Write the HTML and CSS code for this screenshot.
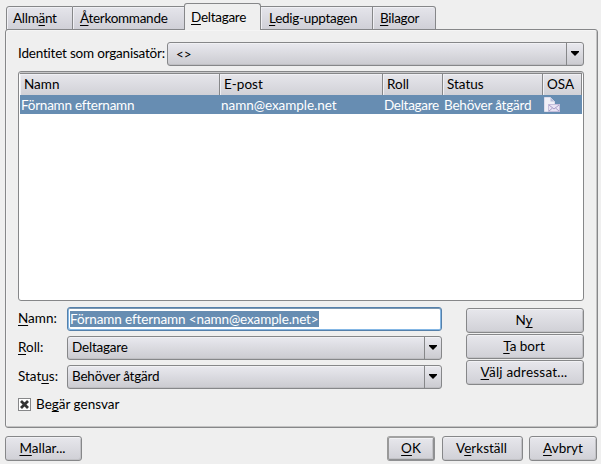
FILE: index.html
```
<!DOCTYPE html>
<html lang="sv">
<head>
<meta charset="utf-8">
<title>Deltagare</title>
<link rel="stylesheet" href="styles.css">
</head>
<body>
<div class="tabs">
  <div class="tab t1">Allm<u>ä</u>nt</div>
  <div class="tab t2"><u>Å</u>terkommande</div>
  <div class="tab active"><u>D</u>eltagare</div>
  <div class="tab t4"><u>L</u>edig-upptagen</div>
  <div class="tab t5"><u>B</u>ilagor</div>
</div>
<main class="panel">
  <div class="organizer">
    <span class="org-label">Identitet som organisatör:</span>
    <div class="combo"><span class="value">&lt;&gt;</span><span class="arrow"></span></div>
  </div>
  <div class="list">
    <div class="row head"><span>Namn</span><span>E-post</span><span>Roll</span><span>Status</span><span>OSA</span></div>
    <div class="row selected"><span class="c1">Förnamn efternamn</span><span class="c2">namn@example.net</span><span class="c3">Deltagare</span><span class="c4">Behöver åtgärd</span><span class="c5">
      <svg width="18" height="17" viewBox="0 0 18 17">
        <path d="M.5 .5h6l4 4v10h-10z" fill="#f0f0f8" stroke="#dcdcec"/>
        <path d="M6.500 .5v4h4z" fill="#b9bdd8"/>
        <rect x="4.500" y="7.500" width="11" height="7" fill="#e9e4f4" stroke="#c4bedb"/>
        <path d="M5 8l5 4 5-4M5 14l3.500-3M15 14l-3.500-3" fill="none" stroke="#a79cc8"/>
      </svg></span></div>
  </div>
  <div class="editor">
    <div class="fields">
      <span class="w1"><u>N</u>amn:</span>
      <div class="input"><span class="selection">Förnamn efternamn &lt;namn@example.net&gt;</span></div>
      <span class="w2"><u>R</u>oll:</span>
      <div class="combo"><span class="value">Deltagare</span><span class="arrow"></span></div>
      <span class="w3">Stat<u>u</u>s:</span>
      <div class="combo"><span class="value">Behöver åtgärd</span><span class="arrow"></span></div>
    </div>
    <div class="actions">
      <div class="button">N<u>y</u></div>
      <div class="button"><u>T</u>a bort</div>
      <div class="button wide"><u>V</u>älj adressat...</div>
    </div>
  </div>
  <div class="check">
    <span class="box"><svg width="11" height="11" viewBox="0 0 11 11"><path d="M2 2l7 7M9 2l-7 7" stroke="#333" stroke-width="2.800"/></svg></span>
    <span class="check-label">Be<u>g</u>är gensvar</span>
  </div>
</main>
<footer class="footer">
  <div class="button b1"><u>M</u>allar...</div>
  <div class="button b2"><u>O</u>K</div>
  <div class="button b3">V<u>e</u>rkställ</div>
  <div class="button b4"><u>A</u>vbryt</div>
</footer>
</body>
</html>
```
FILE: styles.css
```
* { box-sizing: border-box; }
body {
  margin: 0;
  width: 601px;
  height: 464px;
  padding: 3px 3px 2px 5px;
  overflow: hidden;
  background: #efefef;
  color: #000;
  font: 13.5px/18px Lato, "Noto Sans", sans-serif;
  white-space: nowrap;
}
u { text-decoration-thickness: 1px; text-underline-offset: 2px; text-decoration-skip-ink: none; }
.tabs { display: flex; align-items: flex-start; height: 26px; padding-left: 1px; letter-spacing: -.28px; }
.tab {
  height: 24px;
  margin-top: 3px;
  padding: 2px 0 0 6px;
  border: 1px solid #868789;
  border-left-width: 0;
  background: linear-gradient(#e5e5eb, #d0d0d7);
  box-shadow: inset 1px 1px #f0f0f4;
}
.t1 { width: 67px; border-left-width: 1px; border-top-left-radius: 3px; }
.t2 { width: 112px; padding-left: 7px; }
.active {
  position: relative;
  z-index: 1;
  width: 77px;
  height: 27px;
  margin: 0 0 0 -1px;
  padding: 4px 0 0 6px;
  border-width: 1px 1px 0;
  border-radius: 3px 3px 0 0;
  background: #efefef;
  box-shadow: none;
}
.t4 { width: 112px; padding-left: 8px; }
.t5 { width: 63px; padding-left: 7px; border-top-right-radius: 3px; }
.panel {
  height: 399px;
  padding: 12px 12px 0;
  border: 1px solid #868789;
  border-radius: 3px;
  box-shadow: inset 1px 1px #f5f5f5, inset -1px -1px #c4c4c4;
}
.organizer { display: flex; width: 566px; height: 24px; line-height: 22px; }
.org-label { width: 149px; letter-spacing: -.2px; }
.combo {
  display: flex;
  flex: 1;
  height: 24px;
  border: 1px solid #868789;
  border-radius: 3px;
  background: linear-gradient(#e9e9ef, #cbcbd0);
  box-shadow: inset 0 1px #f1f1f4, inset 0 -1px #bfbfc3;
  line-height: 21px;
  letter-spacing: -.2px;
}
.value { flex: 1; padding-left: 4px; }
.organizer .value { padding-left: 8px; line-height: 22px; }
.arrow { width: 17px; border-left: 1px solid #868789; padding: 8px 0 0 4px; }
.arrow::before {
  content: "";
  display: block;
  width: 8px;
  height: 5px;
  background: #000;
  clip-path: polygon(0 0, 100% 0, 100% 20%, 50% 100%, 0 20%);
}
.list {
  width: 566px;
  height: 230px;
  margin-top: 5px;
  padding: 1px;
  border: 1px solid #868789;
  border-radius: 3px;
  background: #fff;
  box-shadow: inset 0 1px #c6c6c8;
}
.row { display: grid; grid-template-columns: 200px 163px 60px 100px 39px; }
.head {
  height: 22px;
  border-top: 1px solid #868789;
  background: linear-gradient(#e6e6eb, #d1d1d7);
  line-height: 21px;
}
.head span { padding-left: 4px; border-right: 1px solid #868789; box-shadow: inset 1px 1px #f0f0f4; }
.selected { height: 19px; background: #678db2; color: #fff; line-height: 21px; letter-spacing: -.2px; }
.selected span { height: 19px; padding-left: 1px; }
.selected .c1 { letter-spacing: -.25px; }
.selected .c2 { letter-spacing: -.05px; }
.selected .c3 { letter-spacing: -.3px; }
.selected svg { display: block; margin-top: 2px; }
.editor { display: flex; justify-content: space-between; width: 566px; margin-top: 6px; }
.fields {
  display: grid;
  grid-template-columns: 49px 375px;
  grid-auto-rows: 24px;
  row-gap: 5px;
  line-height: 22px;
}
.input {
  height: 24px;
  border: 1px solid #5580aa;
  border-radius: 3px;
  padding: 3px 2px;
  background: #fff;
  box-shadow: inset 0 1px #7c97b1, inset 1px -1px #84b7e5, inset -1px 0 #84b7e5;
}
.selection { display: block; width: 249px; height: 16px; background: #678db2; color: #fff; line-height: 17px; letter-spacing: -.12px; }
.actions { display: flex; flex-direction: column; width: 118px; padding-top: 1px; gap: 1px; }
.button {
  height: 25px;
  border: 1px solid #868789;
  border-radius: 3px;
  background: linear-gradient(#e7e7ec, #d0d0d6);
  box-shadow: inset 0 1px #f1f1f4, inset -1px -1px #c2c2c6;
  line-height: 23px;
  text-align: center;
}
.actions .button, .b3 { padding-right: 2px; }
.wide { letter-spacing: .2px; }
.check { display: flex; margin-top: 9px; height: 14px; line-height: 13px; gap: 5px; }
.box { width: 13px; height: 13px; border: 1px solid #868789; background: #fff; }
.box svg { display: block; }
.footer { display: flex; margin-top: 8px; }
.b1 { width: 77px; margin-right: 305px; padding-right: 2px; }
.b2 { width: 48px; margin-right: 7px; border-width: 2px; border-color: #a2a2a2 #8f9092 #8f9092 #999; line-height: 21px; }
.b3 { width: 81px; margin-right: 6px; }
.b4 { width: 68px; }
```
